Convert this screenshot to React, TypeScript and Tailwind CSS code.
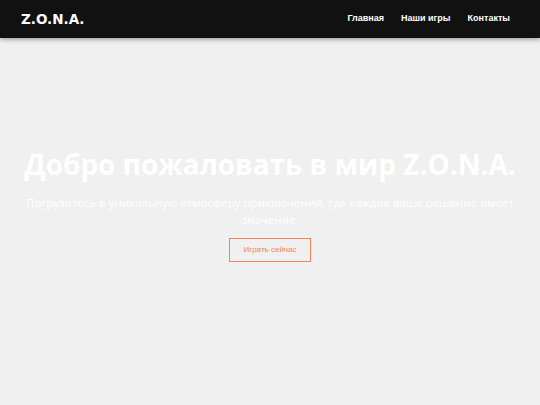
import React from "react";

export default function App() {
  return (
    <div className="w-[540px] h-[405px] bg-[#f0f0f0] flex flex-col overflow-hidden" style={{ fontFamily: "'Open Sans', sans-serif" }}>
      <header className="h-[38px] shrink-0 bg-[#111111] flex items-center justify-between pl-[21px] pr-[30px] shadow-[0_2px_4px_rgba(0,0,0,0.3)] relative z-10">
        <div className="text-white font-bold text-[13.5px] tracking-[0px]" style={{ fontFamily: "'DejaVu Sans', sans-serif" }}>Z.O.N.A.</div>
        <nav className="flex gap-[17px] text-[9px] font-bold text-white" style={{ fontFamily: "'Liberation Sans', Arial, sans-serif" }}>
          <span>Главная</span>
          <span>Наши игры</span>
          <span>Контакты</span>
        </nav>
      </header>
      <main className="flex-1 flex flex-col items-center pt-[108px]">
        <h1 className="text-white font-bold text-[28px] leading-[36px] whitespace-nowrap">Добро пожаловать в мир Z.O.N.A.</h1>
        <p className="mt-[12px] w-[500px] text-center text-white text-[11.5px] leading-[17px]">
          Погрузитесь в уникальную атмосферу приключений, где каждое ваше решение имеет значение.
        </p>
        <button className="mt-[10px] w-[82px] h-[24px] border border-[#f0845c] text-[#f0845c] text-[8px]" style={{ fontFamily: "'Liberation Sans', Arial, sans-serif" }}>
          Играть сейчас
        </button>
      </main>
    </div>
  );
}
